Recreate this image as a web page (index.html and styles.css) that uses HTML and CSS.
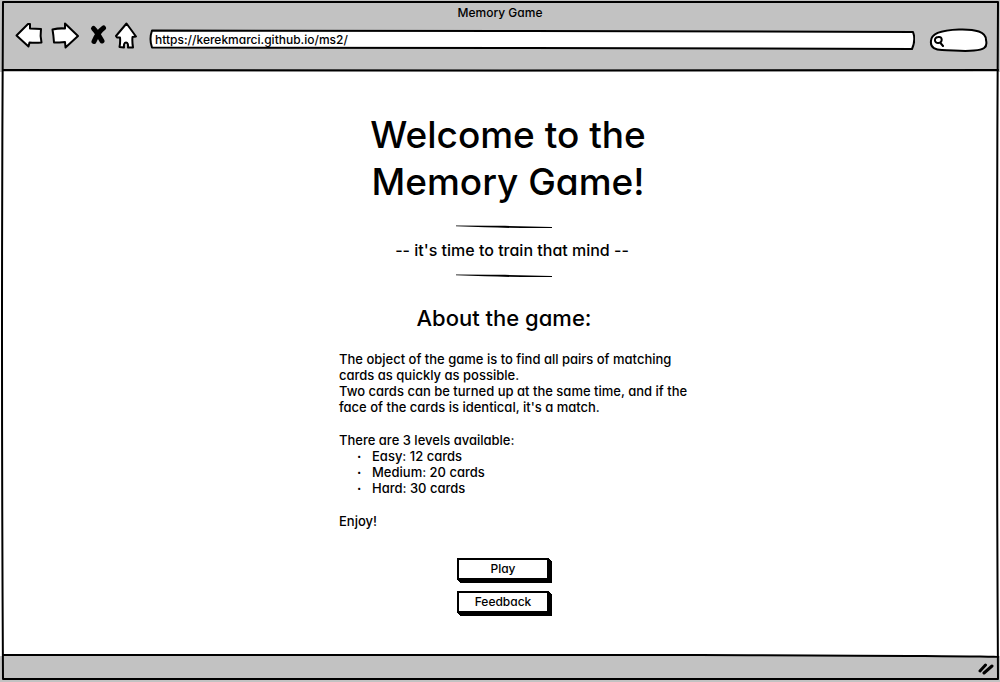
FILE: index.html
```
<!DOCTYPE html>
<html lang="en">
<head>
<meta charset="utf-8">
<meta name="viewport" content="width=device-width, initial-scale=1">
<title>Memory Game</title>
<link rel="stylesheet" href="styles.css">
</head>
<body>
<div class="window">
  <header class="chrome">
    <div class="window-title">Memory Game</div>
    <div class="toolbar">
      <nav class="nav" aria-label="Browser">
        <button class="icon-button" type="button" aria-label="Back"><svg class="icon" width="28" height="28" viewBox="0 0 28 28"><path d="M1.500 14.500 L13 3 L15 3 L15 7.500 L26 8 Q25 15 26.500 21.500 Q20 22 14.500 21.500 L13.500 25.500 Z"/></svg></button>
        <button class="icon-button" type="button" aria-label="Forward"><svg class="icon" width="28" height="28" viewBox="0 0 28 28"><path d="M1.500 8.500 Q8 7 14 7.500 L14 2.500 L27 15 L14.500 26.500 L14 21 Q8 21.500 3 21.500 Q2.500 14 1.500 8.500 Z"/></svg></button>
        <button class="icon-button narrow" type="button" aria-label="Stop"><svg class="icon" width="20" height="28" viewBox="0 0 20 28"><path class="cross" d="M6.500 7.500 Q10 11 15 20 M16.500 7 Q11 11 7 20.500"/></svg></button>
        <button class="icon-button home" type="button" aria-label="Home"><svg class="icon" width="24" height="28" viewBox="0 0 24 28"><path d="M11.500 2.500 L1 15 L2 16.500 L5 16.500 Q5.500 21 4.500 26 L9 26.500 Q8.500 21.500 11 21.500 Q13.500 21.500 13 26.500 L18 26.500 Q17 20 17.500 16 L21 15.500 Z"/></svg></button>
      </nav>
      <label class="address">
        <svg class="outline" viewBox="0 0 766 22" preserveAspectRatio="none" aria-hidden="true"><path d="M3 1.500 Q180 2 380 2 L764 3 Q767 11 763 20 L380 19 L3 18.500 Q0 10 3 1.500 Z"/></svg>
        <input class="field" type="text" aria-label="Address" value="https://kerekmarci.github.io/ms2/">
      </label>
      <label class="search">
        <svg class="outline" viewBox="0 0 59 25" preserveAspectRatio="none" aria-hidden="true"><path d="M2 13 C2 5 15 2 30 1.500 C47 1 57 4 57 12 C59 20 54 22 45 22.500 C34 24 24 22 13 22 C7 22 1 20 2 13 Z"/></svg>
        <svg class="lens" width="12" height="12" viewBox="0 0 12 12" aria-hidden="true"><path d="M5.500 2 C0.500 2 1 8.500 5.500 8 C10 8 9.500 1 5.500 2 M7.500 8 L10 11"/></svg>
        <input class="field" type="search" aria-label="Search">
      </label>
    </div>
    <svg class="header-line" viewBox="0 0 1000 4" preserveAspectRatio="none" aria-hidden="true"><path d="M3 2 Q250 3 500 2.500 T998 2"/></svg>
  </header>

  <main class="page">
    <h1 class="welcome">Welcome to the<br>Memory Game!</h1>
    <svg class="rule" viewBox="0 0 98 4" aria-hidden="true"><path d="M1 0.500 Q20 0.500 50 0.800 L97 2 L97 3 Q60 3.300 30 2.300 L1 1.200 Z"/></svg>
    <p class="tagline">-- it's time to train that mind --</p>
    <svg class="rule" viewBox="0 0 98 4" aria-hidden="true"><path d="M1 0.500 Q20 0.500 50 0.800 L97 2 L97 3 Q60 3.300 30 2.300 L1 1.200 Z"/></svg>
    <h2 class="about">About the game:</h2>
    <div class="rules">
      <p>The object of the game is to find all pairs of matching<br>cards as quickly as possible.<br>Two cards can be turned up at the same time, and if the<br>face of the cards is identical, it's a match.</p>
      <div>
        <p>There are 3 levels available:</p>
        <ul class="levels">
          <li>Easy: 12 cards</li>
          <li>Medium: 20 cards</li>
          <li>Hard: 30 cards</li>
        </ul>
      </div>
      <p>Enjoy!</p>
    </div>
    <div class="actions">
      <button class="action" type="button">Play</button>
      <button class="action" type="button">Feedback</button>
    </div>
  </main>

  <footer class="status">
    <svg class="footer-line" viewBox="0 0 1000 4" preserveAspectRatio="none" aria-hidden="true"><path d="M3 1 Q400 0 700 1 T998 3"/></svg>
    <svg class="grip" width="18" height="14" viewBox="0 0 18 14" aria-hidden="true"><path d="M3 10 L8.500 4 M7 12 L15 5"/></svg>
  </footer>
  <svg class="frame" viewBox="0 0 1000 682" preserveAspectRatio="none" aria-hidden="true"><path d="M3 2 Q500 1 998 2 Q996 340 998 679 Q500 681 3 679 Q1 340 3 2 Z"/></svg>
</div>
</body>
</html>
```
FILE: styles.css
```
* { box-sizing: border-box; }

body {
  margin: 0;
  background: #fff;
  color: #000;
  font-family: Inter, "Liberation Sans", sans-serif;
  font-feature-settings: "cv11";
  font-size: 12px;
  font-weight: 500;
  line-height: 16px;
}

h1, h2, p, ul { margin: 0; font-weight: inherit; }

button, input {
  font: inherit;
  font-feature-settings: inherit;
  color: inherit;
}

svg {
  fill: none;
  stroke: #000;
  stroke-linecap: round;
  stroke-linejoin: round;
}

.window {
  position: relative;
  display: flex;
  flex-direction: column;
  min-height: 100vh;
}

.frame {
  position: absolute;
  inset: 0;
  width: 100%;
  height: 100%;
  stroke-width: 2;
  pointer-events: none;
}

.frame path, .header-line path, .footer-line path, .outline path {
  vector-effect: non-scaling-stroke;
}

.chrome {
  display: flex;
  flex-direction: column;
  background: #c2c2c2;
  padding-top: 5px;
}

.window-title { text-align: center; }

.toolbar {
  display: flex;
  align-items: flex-start;
  padding: 0 12px 0 15px;
  height: 47px;
}

.nav { display: flex; gap: 8px; width: 134px; }

.icon-button {
  flex: none;
  width: 28px;
  height: 28px;
  padding: 0;
  border: 0;
  background: none;
}

.icon-button.narrow { width: 20px; }
.icon-button.home { width: 24px; }
.icon { display: block; fill: #fff; stroke-width: 2; }
.cross { stroke-width: 5; fill: none; }

.address, .search { position: relative; display: flex; align-items: center; }
.address { flex: 1; height: 22px; margin: 8px 14px 0 0; padding-bottom: 1px; }
.search { width: 59px; height: 25px; margin-top: 7px; padding-left: 4px; }

.outline {
  position: absolute;
  inset: 0;
  width: 100%;
  height: 100%;
  fill: #fff;
  stroke-width: 2;
}

.lens { position: relative; flex: none; stroke-width: 2; }

.field {
  position: relative;
  flex: 1;
  min-width: 0;
  height: 16px;
  padding: 0 6px;
  border: 0;
  outline: 0;
  background: transparent;
  appearance: none;
}

.header-line, .footer-line { display: block; width: 100%; height: 4px; stroke-width: 2; }

.page {
  flex: 1;
  display: flex;
  flex-direction: column;
  align-items: center;
  padding: 39px 0 32px 8px;
}

.welcome {
  padding-left: 8px;
  font-size: 37px;
  line-height: 47px;
  text-align: center;
}

.rule { width: 98px; height: 4px; margin-top: 20px; fill: #000; stroke: none; }

.tagline {
  margin: 9px 0 -8px;
  padding-left: 16px;
  font-size: 16px;
  line-height: 24px;
}

.about { margin-top: 24px; font-size: 22px; line-height: 32px; }

.rules {
  display: flex;
  flex-direction: column;
  gap: 17px;
  width: 340px;
  margin: 17px 0 0 10px;
  font-size: 13px;
  white-space: nowrap;
}

.levels { padding: 0; list-style: none; }
.levels li { display: flex; }
.levels li::before { content: "·"; width: 15px; margin-left: 18px; font-weight: 700; }

.actions { display: flex; flex-direction: column; gap: 11px; margin: 29px 2px 0 0; }

.action {
  width: 92px;
  height: 22px;
  padding: 0;
  border: 2px solid #000;
  background: #fff;
  box-shadow: 1px 1px #000, 2px 2px #000, 3px 3px #000;
  line-height: 16px;
}

.status {
  display: flex;
  flex-direction: column;
  align-items: flex-end;
  height: 28px;
  background: linear-gradient(#fff 2px, #c2c2c2 2px);
}

.grip { margin: 3px 5px 0 0; stroke-width: 3; }
```
